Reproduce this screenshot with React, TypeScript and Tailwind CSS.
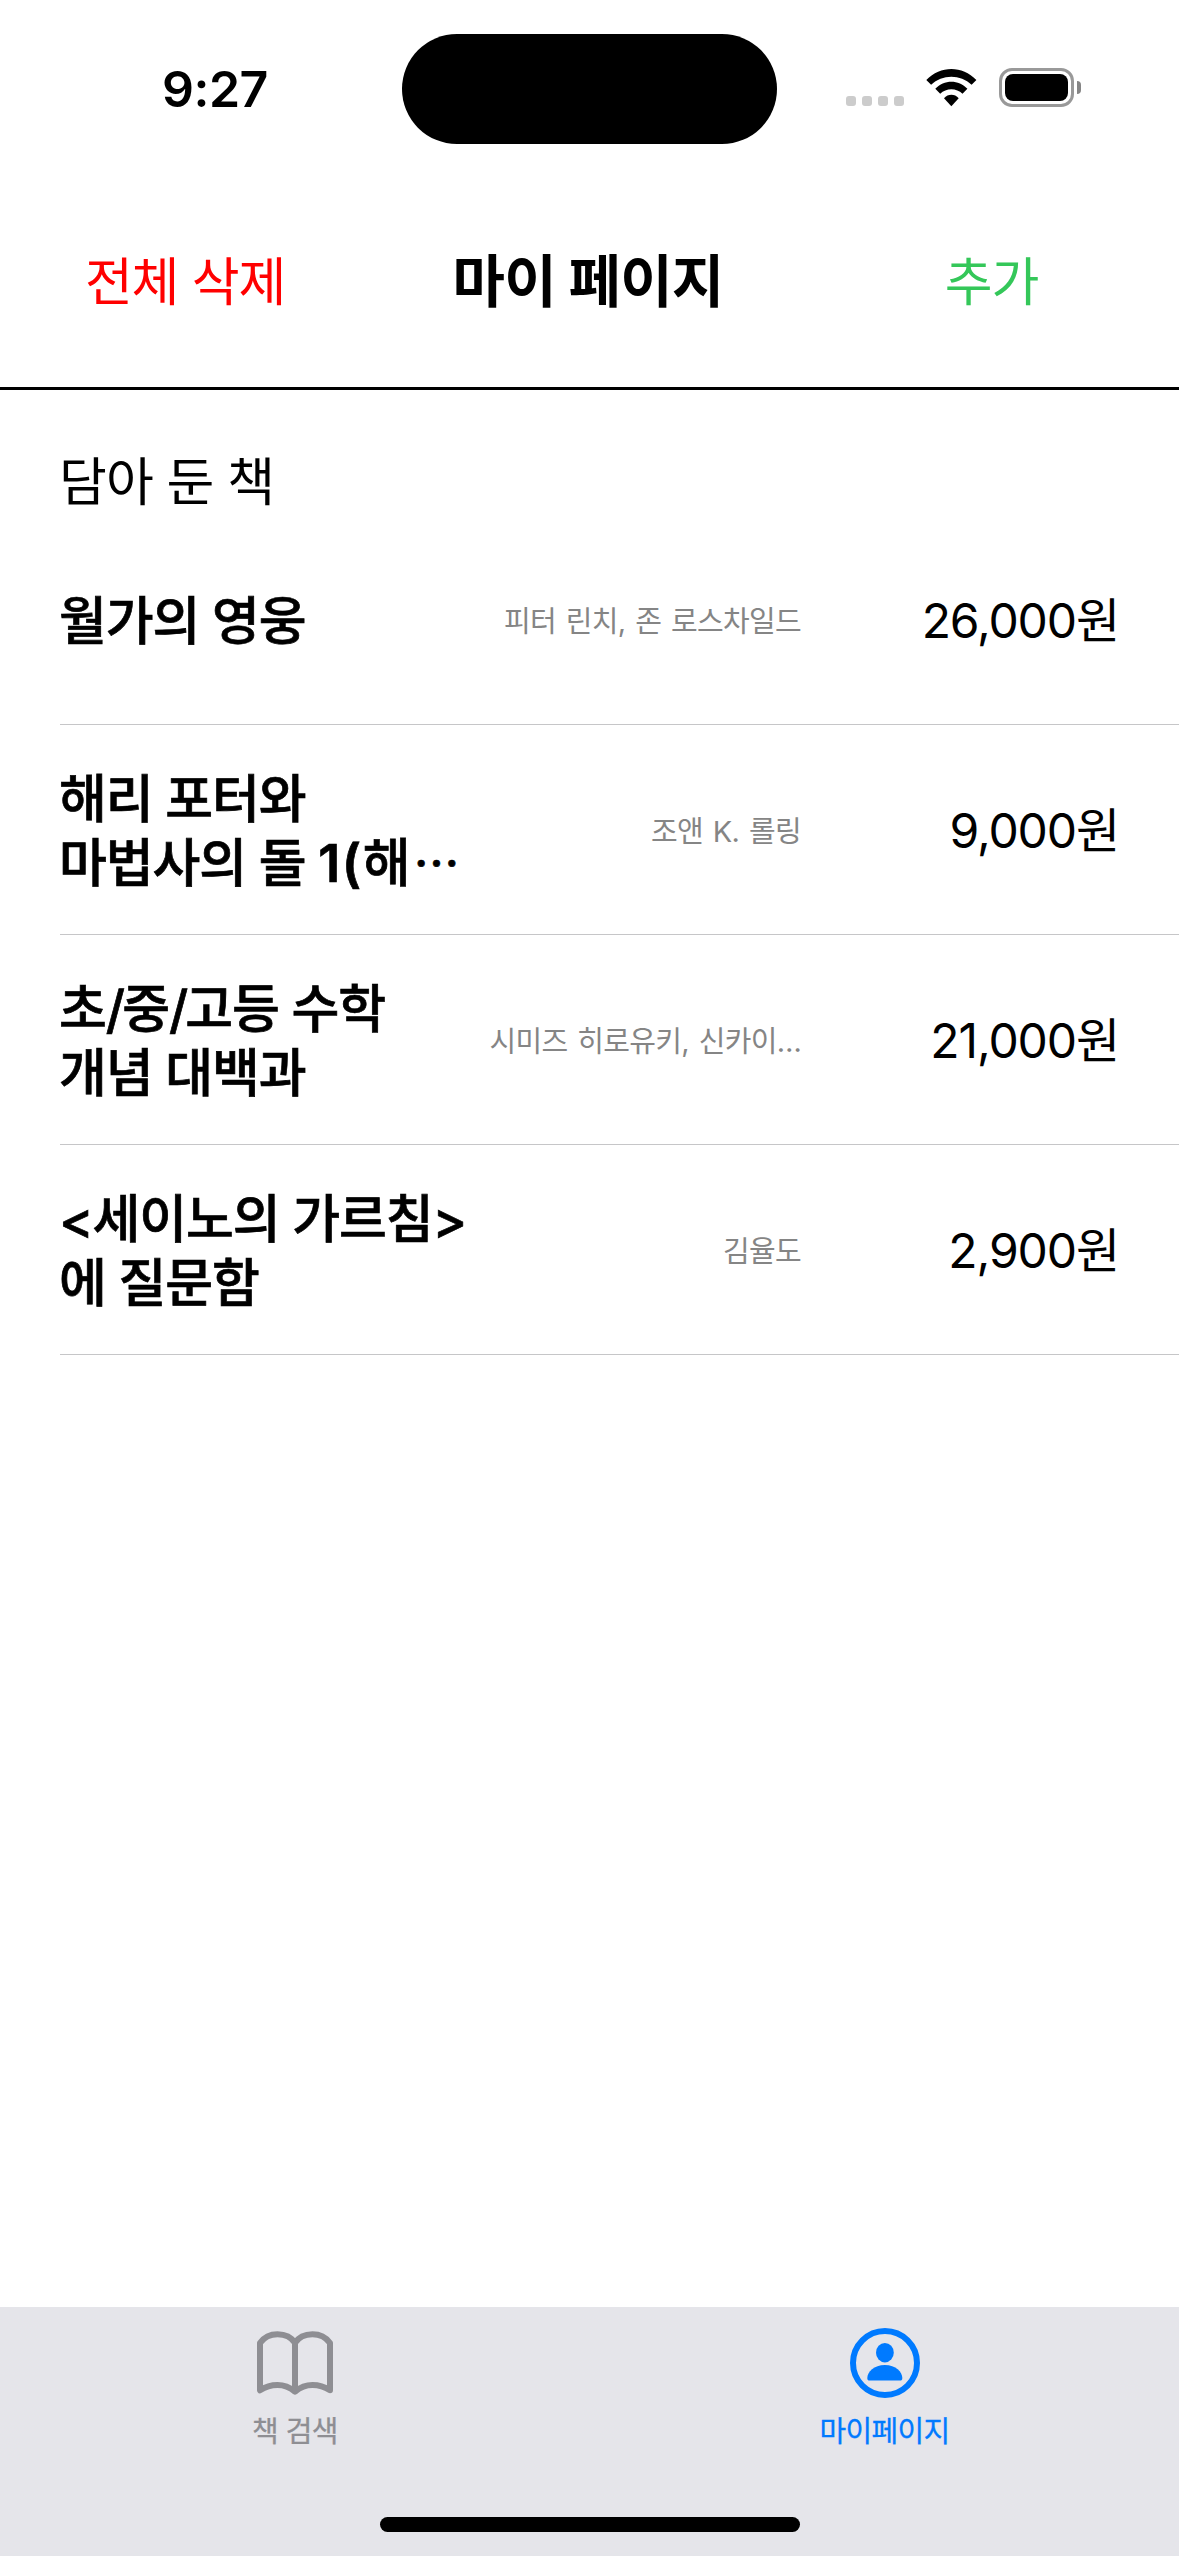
type Book = { title: string[]; clipped?: boolean; authors: string; price: string };

const books: Book[] = [
  { title: ["월가의 영웅"], authors: "피터 린치, 존 로스차일드", price: "26,000원" },
  { title: ["해리 포터와", "마법사의 돌 1(해"], clipped: true, authors: "조앤 K. 롤링", price: "9,000원" },
  { title: ["초/중/고등 수학", "개념 대백과"], authors: "시미즈 히로유키, 신카이…", price: "21,000원" },
  { title: ["<세이노의 가르침>", "에 질문함"], authors: "김율도", price: "2,900원" },
];

function WifiIcon() {
  return (
    <svg width="51" height="38" viewBox="0 0 51 38" fill="black">
      <path d="M0.3 11C14.5 -3.6 36.2 -3.6 50.4 11L45.6 15.8C34.5 5 16.2 5 5.1 15.8Z" />
      <path d="M9.3 19.8C18 10.3 32.7 10.3 41.4 19.8L36.5 24.8C30.5 18.8 20.2 18.8 14.2 24.8Z" />
      <path d="M18 29.2C22 24.6 28.7 24.6 32.7 29.2L25.35 37.2Z" />
    </svg>
  );
}

function StatusBar() {
  return (
    <div className="grid h-[177px] grid-cols-[402px_375px_402px] items-center">
      <div className="pl-[162px] text-[50px] leading-[58px] font-semibold tracking-[-0.5px]">9:27</div>
      <div className="h-[110px] rounded-full bg-black" />
      <div className="flex h-[39px] pl-[69px]">
        <div className="flex gap-[6px] pt-[27px]">
          {[0, 1, 2, 3].map((dot) => (
            <span key={dot} className="h-[10px] w-[10px] rounded-[3px] bg-[#cccccc]" />
          ))}
        </div>
        <div className="ml-[22px]">
          <WifiIcon />
        </div>
        <div className="-mt-px ml-[22px] h-[39px] w-[75px] rounded-[13px] border-[3px] border-[#999999] p-[3px]">
          <div className="h-full rounded-[8px] bg-black" />
        </div>
        <div className="mt-[12px] ml-[3px] h-[13px] w-[4px] rounded-r-full bg-[#858585]" />
      </div>
    </div>
  );
}

function TitleLine({ text }: { text: string }) {
  return text.split(/(\/|1\()/).map((part, i) => {
    if (part === "/") return <span key={i} className="tracking-[-2.8px]">{part}</span>;
    if (part === "1(") return <span key={i} className="font-semibold tracking-[1.5px]">{part}</span>;
    return part;
  });
}

function BookRow({ book }: { book: Book }) {
  return (
    <li className="ml-[60px] flex h-[210px] items-center border-b border-[#c6c6c8] pt-[4px] pr-[60px]">
      <div className="-ml-px w-[412px] text-[52px] leading-[64px] font-medium tracking-[-1.1px] whitespace-nowrap [-webkit-text-stroke:0.7px_black]">
        {book.title.map((line, i) => (
          <div key={line} className="h-[64px]">
            <TitleLine text={line} />
            {book.clipped && i === book.title.length - 1 && (
              <span className="ml-[4px] align-[2px] font-['Noto_Sans_CJK_KR',sans-serif] text-[46px] leading-none">…</span>
            )}
          </div>
        ))}
      </div>
      <div className="w-[330px] text-right text-[29px] leading-[40px] tracking-[-0.7px] whitespace-nowrap text-[#858585] [word-spacing:2.4px]">
        {book.authors}
      </div>
      <div className="flex-1 pb-[2px] text-right text-[48px] leading-[60px] tracking-[-1.1px] whitespace-nowrap">{book.price}</div>
    </li>
  );
}

function BookIcon() {
  return (
    <svg width="76" height="70" viewBox="0 0 76 70" fill="none" stroke="currentColor" strokeWidth="6" strokeLinejoin="round" strokeLinecap="round">
      <path d="M3 15C7 9.5 13.5 6.3 20.5 6.3C28 6.3 34.5 9.5 38 15C41.5 9.5 48 6.3 55.5 6.3C62.5 6.3 69 9.5 73 15V62.3C68 59 62 57 55.5 57C49 57 43 59.5 38 63.7C33 59.5 27 57 20.5 57C14 57 8 59 3 62.3Z" />
      <path d="M38 15V63" />
    </svg>
  );
}

function PersonIcon() {
  return (
    <svg width="70" height="70" viewBox="0 0 70 70" fill="currentColor">
      <circle cx="35" cy="35" r="32" fill="none" stroke="currentColor" strokeWidth="6" />
      <ellipse cx="34.9" cy="24.7" rx="8.9" ry="9.7" />
      <path d="M19.6 52.6C18 52.6 17.3 51.8 17.3 50C17.3 44 24 37 34.9 37S52.3 44 52.3 50C52.3 51.8 51.6 52.6 50 52.6Z" />
    </svg>
  );
}

export default function App() {
  return (
    <div className="flex h-[2556px] w-[1179px] flex-col bg-white font-['Inter','Noto_Sans_CJK_KR',sans-serif] text-black">
      <StatusBar />
      <header className="grid h-[213px] grid-cols-[370px_436px_373px] items-center border-b-[3px] border-black pt-[2px] text-center text-[52px] leading-[64px] tracking-[-1.15px]">
        <button className="text-[#ff0000]">전체 삭제</button>
        <h1 className="pb-[2px] text-[57px] font-bold tracking-[-0.8px]">마이 페이지</h1>
        <button className="pr-[2px] text-[#34c759]">추가</button>
      </header>
      <main className="flex-1">
        <h2 className="h-[125px] pt-[61px] pl-[59px] text-[52px] leading-[64px] tracking-[-0.9px]">담아 둔 책</h2>
        <ul>
          {books.map((book) => (
            <BookRow key={book.authors} book={book} />
          ))}
        </ul>
      </main>
      <nav className="flex h-[249px] flex-col items-center justify-between bg-[#e5e5ea] pb-[24px]">
        <div className="grid w-full grid-cols-[590px_589px] pt-[21px] text-[29px] leading-[40px]">
          <div className="flex flex-col items-center gap-[14px] text-[#8e8e93]">
            <BookIcon />
            <span className="tracking-[-0.6px] [-webkit-text-stroke:0.3px_currentColor]">책 검색</span>
          </div>
          <div className="flex flex-col items-center gap-[14px] text-[#007aff]">
            <PersonIcon />
            <span className="tracking-[-0.7px] [-webkit-text-stroke:0.3px_currentColor]">마이페이지</span>
          </div>
        </div>
        <div className="h-[15px] w-[420px] rounded-full bg-black" />
      </nav>
    </div>
  );
}
